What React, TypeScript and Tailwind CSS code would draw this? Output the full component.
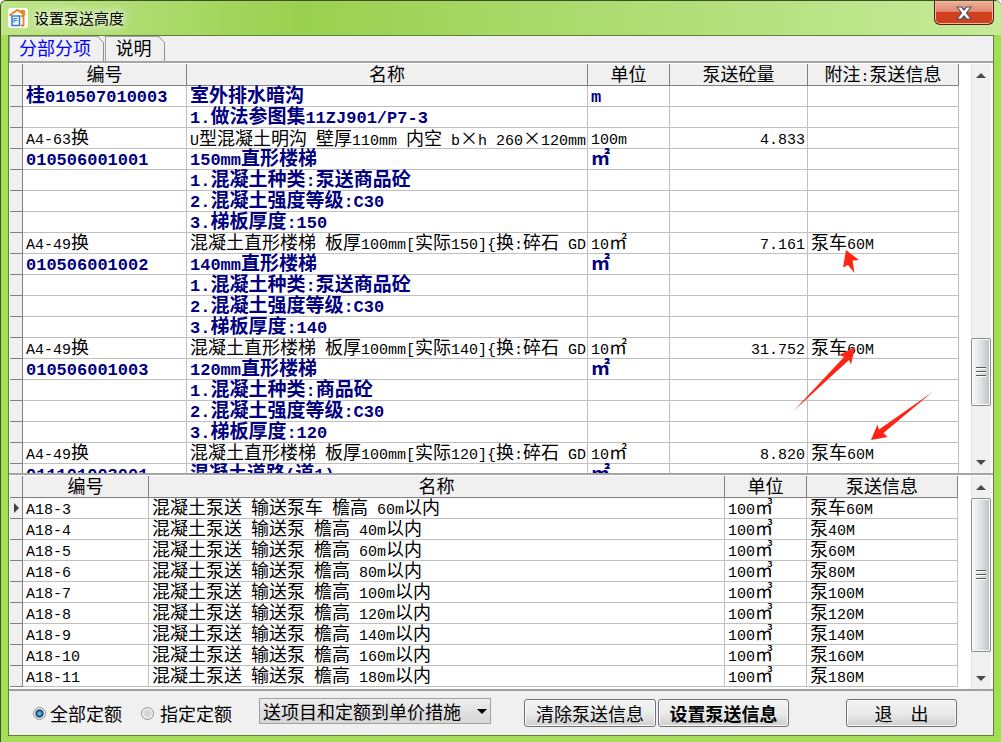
import { Fragment, useState } from "react";

type QuotaRow = {
  code?: string;
  name?: string;
  unit?: string;
  amount?: string;
  note?: string;
  bold?: boolean;
};

type PumpRow = { code: string; name: string; unit: string; info: string };

const QUOTAS: QuotaRow[] = [
  { code: "桂010507010003", name: "室外排水暗沟", unit: "m", bold: true },
  { name: "1.做法参图集11ZJ901/P7-3", bold: true },
  { code: "A4-63换", name: "U型混凝土明沟 壁厚110mm 内空 b×h 260×120mm", unit: "100m", amount: "4.833" },
  { code: "010506001001", name: "150mm直形楼梯", unit: "㎡", bold: true },
  { name: "1.混凝土种类:泵送商品砼", bold: true },
  { name: "2.混凝土强度等级:C30", bold: true },
  { name: "3.梯板厚度:150", bold: true },
  { code: "A4-49换", name: "混凝土直形楼梯 板厚100mm[实际150]{换:碎石 GD", unit: "10㎡", amount: "7.161", note: "泵车60M" },
  { code: "010506001002", name: "140mm直形楼梯", unit: "㎡", bold: true },
  { name: "1.混凝土种类:泵送商品砼", bold: true },
  { name: "2.混凝土强度等级:C30", bold: true },
  { name: "3.梯板厚度:140", bold: true },
  { code: "A4-49换", name: "混凝土直形楼梯 板厚100mm[实际140]{换:碎石 GD", unit: "10㎡", amount: "31.752", note: "泵车60M" },
  { code: "010506001003", name: "120mm直形楼梯", unit: "㎡", bold: true },
  { name: "1.混凝土种类:商品砼", bold: true },
  { name: "2.混凝土强度等级:C30", bold: true },
  { name: "3.梯板厚度:120", bold: true },
  { code: "A4-49换", name: "混凝土直形楼梯 板厚100mm[实际120]{换:碎石 GD", unit: "10㎡", amount: "8.820", note: "泵车60M" },
  { code: "011101003001", name: "混凝土道路(道1)", unit: "㎡", bold: true },
];

const PUMPS: PumpRow[] = [
  { code: "A18-3", name: "混凝土泵送 输送泵车 檐高 60m以内", unit: "100㎥", info: "泵车60M" },
  { code: "A18-4", name: "混凝土泵送 输送泵 檐高 40m以内", unit: "100㎥", info: "泵40M" },
  { code: "A18-5", name: "混凝土泵送 输送泵 檐高 60m以内", unit: "100㎥", info: "泵60M" },
  { code: "A18-6", name: "混凝土泵送 输送泵 檐高 80m以内", unit: "100㎥", info: "泵80M" },
  { code: "A18-7", name: "混凝土泵送 输送泵 檐高 100m以内", unit: "100㎥", info: "泵100M" },
  { code: "A18-8", name: "混凝土泵送 输送泵 檐高 120m以内", unit: "100㎥", info: "泵120M" },
  { code: "A18-9", name: "混凝土泵送 输送泵 檐高 140m以内", unit: "100㎥", info: "泵140M" },
  { code: "A18-10", name: "混凝土泵送 输送泵 檐高 160m以内", unit: "100㎥", info: "泵160M" },
  { code: "A18-11", name: "混凝土泵送 输送泵 檐高 180m以内", unit: "100㎥", info: "泵180M" },
];

// Latin runs go in the monospaced face at half the width of a Chinese glyph;
// the multiplication sign has to stay full width.
function MixedText({ text, bold }: { text: string; bold?: boolean }) {
  const runs = text.match(/[\x20-\x7e]+|×|[^\x20-\x7e×]+/g) ?? [];
  return (
    <div
      className={`h-5 font-["Liberation_Sans","Noto_Sans_CJK_SC",sans-serif] leading-5 whitespace-pre ${
        bold ? "text-[19px] font-bold text-[#000080]" : "text-[18px] text-black"
      }`}
    >
      {runs.map((run, i) => {
        if (run === "×") {
          return (
            <span key={i} className='font-["Noto_Sans_CJK_SC",sans-serif] leading-none'>
              ×
            </span>
          );
        }
        if (/^[\x20-\x7e]/.test(run)) {
          return (
            <span
              key={i}
              className={`font-["Liberation_Mono",monospace] leading-none ${bold ? "text-[17px]" : "text-[15px]"}`}
            >
              {run}
            </span>
          );
        }
        return <Fragment key={i}>{run}</Fragment>;
      })}
    </div>
  );
}

function HeadCell({ label }: { label?: string }) {
  return (
    <th className="h-[22px] border-r border-b border-[#808080] bg-[#f0f0f0] p-0 text-center font-normal">
      {label && <MixedText text={label} />}
    </th>
  );
}

function Cell({ text, bold, right }: { text?: string; bold?: boolean; right?: boolean }) {
  return (
    <td className={`h-[21px] border-r border-b border-[#c0c0c0] p-0 ${right ? "pr-0.5 text-right" : "pl-[3px]"}`}>
      {text && <MixedText text={text} bold={bold} />}
    </td>
  );
}

function GutterCell({ current }: { current?: boolean }) {
  return (
    <td className="h-[21px] border-r border-b border-[#808080] bg-[#f0f0f0] p-0">
      {current && (
        <svg viewBox="0 0 12 12" className="size-3" aria-hidden="true">
          <path d="M4 1v10l5-5z" fill="#404040" />
        </svg>
      )}
    </td>
  );
}

function ScrollBar({ before, thumb, after }: { before: string; thumb: string; after: string }) {
  return (
    <div className="mr-0.5 flex w-5 shrink-0 flex-col bg-[#f0f0f0] shadow-[inset_1px_0_0_#e4e4e4]">
      <button type="button" aria-label="向上滚动" className="flex h-[22px] shrink-0 items-center justify-center">
        <svg viewBox="0 0 10 5" className="h-[5px] w-2.5" aria-hidden="true">
          <path d="M5 0l5 5H0z" fill="#4a4a4a" />
        </svg>
      </button>
      <div className={`basis-0 ${before}`} />
      <div
        className={`flex basis-0 flex-col items-center justify-center gap-0.5 rounded-xs border border-[#8e8e8e] bg-linear-to-r from-[#f8f8f8] via-[#e3e4e7] via-45% to-[#bfc0c4] shadow-[inset_0_0_0_1px_#fafafa] ${thumb}`}
      >
        <span className="h-0.5 w-2.5 border-t border-[#5a5a5a] bg-white" />
        <span className="h-0.5 w-2.5 border-t border-[#5a5a5a] bg-white" />
        <span className="h-0.5 w-2.5 border-t border-[#5a5a5a] bg-white" />
      </div>
      <div className={`basis-0 ${after}`} />
      <button type="button" aria-label="向下滚动" className="flex h-[22px] shrink-0 items-center justify-center">
        <svg viewBox="0 0 10 5" className="h-[5px] w-2.5" aria-hidden="true">
          <path d="M0 0h10L5 5z" fill="#4a4a4a" />
        </svg>
      </button>
    </div>
  );
}

function TitleBar() {
  return (
    <header className="-mx-[7px] flex h-[34px] shrink-0 items-start bg-linear-to-r from-[#bfe588] via-[#9ad04e] via-30% to-[#c6ea98] px-[7px]">
      <div className="flex h-full flex-1 items-center gap-1.5">
        <svg viewBox="0 0 20 20" className="size-5" aria-hidden="true">
          <rect width="20" height="20" rx="3" fill="#fff" />
          <path d="M1.500 7.500L9.500 2l7.500 5" fill="none" stroke="#f07d1a" strokeWidth="2" />
          <path d="M13 3h3v4M13 8h2.500v9.500H13" fill="none" stroke="#f07d1a" strokeWidth="1.800" />
          <path d="M4 8h7.500v9.500H4z" fill="#fff" stroke="#2c7fd0" strokeWidth="1.600" />
          <path d="M6 10.500h3.500M6 12.500h3.500M6 10v5" stroke="#2c7fd0" strokeWidth="1" />
        </svg>
        <h1 className="text-[15px] leading-5 text-black [text-shadow:0_0_8px_#fff,0_0_12px_#fff]">设置泵送高度</h1>
      </div>
      <button
        type="button"
        aria-label="关闭"
        className="flex h-6 w-[60px] items-center justify-center rounded-b-md border border-t-0 border-[#5a1a10] bg-linear-to-b from-[#f0b09a] via-[#e08a70] via-45% to-[#d0401c] to-50% shadow-[inset_0_0_0_1px_#f3b9a4]"
      >
        <svg viewBox="0 0 16 14" className="h-3.5 w-4" aria-hidden="true">
          <path
            d="M1 1h4.500L8 4l2.500-3H15l-4.600 6L15 13h-4.500L8 10l-2.500 3H1l4.600-6z"
            fill="#fff"
            stroke="#4d4f63"
            strokeWidth="1.200"
            strokeLinejoin="round"
          />
        </svg>
      </button>
    </header>
  );
}

function Tabs() {
  const [tab, setTab] = useState(0);
  return (
    <div role="tablist" className="flex h-[25px] shrink-0 gap-px">
      {["分部分项", "说明"].map((label, i) => (
        <button
          key={label}
          type="button"
          role="tab"
          aria-selected={tab === i}
          onClick={() => setTab(i)}
          className={`relative h-full border-t border-l border-[#a0a0a0] pr-1 font-["Liberation_Sans","Noto_Sans_CJK_SC",sans-serif] text-[18px] leading-6 ${
            i === 0 ? "w-[95px]" : "w-[60px]"
          } ${tab === i ? "text-[#0000ff]" : "text-black"}`}
        >
          {label}
          <svg viewBox="0 0 7 25" className="absolute -top-px right-0 h-[25px] w-[7px]" aria-hidden="true">
            <path d="M1 0h6v6z" fill="#f0f0f0" />
            <path d="M0.500 0.500L6.500 6.500V25" fill="none" stroke="#909090" />
          </svg>
        </button>
      ))}
    </div>
  );
}

function QuotaGrid() {
  return (
    <section className="relative flex min-h-0 flex-1 overflow-hidden border-t-2 border-[#a5a5a8] bg-white pt-px pl-px">
      <div className="min-w-0 flex-1 overflow-hidden pr-3">
        <table className="w-full table-fixed border-separate border-spacing-0">
          <colgroup>
            <col className="w-[13px]" />
            <col className="w-[164px]" />
            <col />
            <col className="w-[82px]" />
            <col className="w-[138px]" />
            <col className="w-[151px]" />
          </colgroup>
          <thead>
            <tr>
              <HeadCell />
              <HeadCell label="编号" />
              <HeadCell label="名称" />
              <HeadCell label="单位" />
              <HeadCell label="泵送砼量" />
              <HeadCell label="附注:泵送信息" />
            </tr>
          </thead>
          <tbody>
            {QUOTAS.map((q, i) => (
              <tr key={i}>
                <GutterCell />
                <Cell text={q.code} bold={q.bold} />
                <Cell text={q.name} bold={q.bold} />
                <Cell text={q.unit} bold={q.bold} />
                <Cell text={q.amount} right />
                <Cell text={q.note} />
              </tr>
            ))}
          </tbody>
        </table>
      </div>
      <ScrollBar before="grow-[253]" thumb="grow-[67]" after="grow-[45]" />
      {/* red annotation arrows over the notes column */}
      <svg viewBox="0 0 150 200" className="pointer-events-none absolute top-[182px] right-[53px] h-[200px] w-[150px]" aria-hidden="true">
        <g fill="#ff2414">
          <path d="M56 5l13 10-6.500 0.500 2 12.500-6.500-8-5 2.500z" />
          <path d="M3.500 166L54 112l-5-2 16-8-4 17.500-2-4.500z" />
          <path d="M142.500 147L93.500 188l4 4-16.500 3 6.500-15.500 1.500 5z" />
        </g>
      </svg>
    </section>
  );
}

function PumpGrid() {
  return (
    <section className="flex h-[216px] shrink-0 overflow-hidden border-t-2 border-[#a5a5a8] bg-white pt-px pl-px">
      <div className="min-w-0 flex-1 overflow-hidden pr-[13px]">
        <table className="w-full table-fixed border-separate border-spacing-0">
          <colgroup>
            <col className="w-[13px]" />
            <col className="w-[126px]" />
            <col />
            <col className="w-[82px]" />
            <col className="w-[151px]" />
          </colgroup>
          <thead>
            <tr>
              <HeadCell />
              <HeadCell label="编号" />
              <HeadCell label="名称" />
              <HeadCell label="单位" />
              <HeadCell label="泵送信息" />
            </tr>
          </thead>
          <tbody>
            {PUMPS.map((p, i) => (
              <tr key={p.code}>
                <GutterCell current={i === 0} />
                <Cell text={p.code} />
                <Cell text={p.name} />
                <Cell text={p.unit} />
                <Cell text={p.info} />
              </tr>
            ))}
          </tbody>
        </table>
      </div>
      <ScrollBar before="grow-0" thumb="grow-[153]" after="grow-[15]" />
    </section>
  );
}

const RADIO =
  "size-[13px] appearance-none rounded-full border border-[#8e8f8f] bg-radial from-[#c8ccd0] to-[#f4f4f4] shadow-[inset_0_0_0_1px_#f4f4f4] checked:from-[#5fc4f0] checked:from-10% checked:via-[#123f66] checked:via-45% checked:to-[#f4f4f4] checked:to-65%";

const BUTTON =
  "h-7 rounded-[3px] border border-[#707070] bg-linear-to-b from-[#f2f2f2] via-[#ebebeb] via-50% to-[#cfcfcf] text-[18px] leading-6 whitespace-pre text-black shadow-[inset_0_0_0_1px_#fbfbfb]";

function Footer() {
  const [scope, setScope] = useState("all");
  return (
    <footer className="flex h-[46px] shrink-0 items-center border-t-2 border-[#a0a0a0] pl-6 text-[18px] text-black">
      <label className="flex items-center gap-1">
        <input type="radio" name="scope" className={RADIO} checked={scope === "all"} onChange={() => setScope("all")} />
        全部定额
      </label>
      <label className="ml-[19px] flex items-center gap-1.5">
        <input type="radio" name="scope" className={RADIO} checked={scope === "some"} onChange={() => setScope("some")} />
        指定定额
      </label>
      <div className="relative mb-1 ml-[27px]">
        <select
          aria-label="送项目和定额"
          className="block h-[26px] w-[232px] appearance-none border border-[#a0a0a0] bg-linear-to-b from-[#ededed] to-[#d6d6d6] pl-[3px] text-[18px] leading-6"
        >
          <option>送项目和定额到单价措施</option>
        </select>
        <svg viewBox="0 0 10 5" className="pointer-events-none absolute top-[11px] right-1 h-[5px] w-2.5" aria-hidden="true">
          <path d="M0 0h10L5 5z" fill="#000" />
        </svg>
      </div>
      <button type="button" className={`ml-[33px] w-[132px] ${BUTTON}`}>
        清除泵送信息
      </button>
      <button type="button" className={`ml-0.5 w-[131px] font-bold ${BUTTON}`}>
        设置泵送信息
      </button>
      <button type="button" className={`mr-9 ml-auto w-[111px] ${BUTTON}`}>
        {"退　出"}
      </button>
    </footer>
  );
}

export default function App() {
  return (
    <div className='flex h-screen flex-col overflow-hidden rounded-t-md border-t border-l border-[#3d5222] bg-[#a5dc58] px-[7px] pb-1.5 font-["Noto_Sans_CJK_SC",sans-serif]'>
      <TitleBar />
      <main className="flex min-h-0 flex-1 flex-col border border-[#5f7f3a] bg-[#f0f0f0]">
        <Tabs />
        <QuotaGrid />
        <PumpGrid />
        <Footer />
      </main>
    </div>
  );
}
